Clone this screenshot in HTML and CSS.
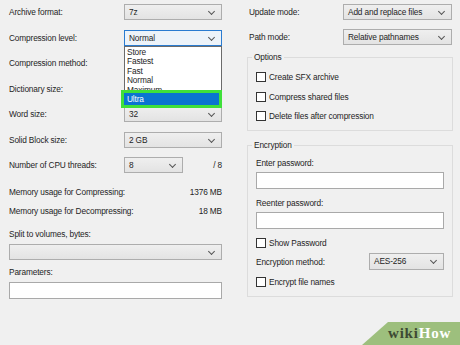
FILE: index.html
```html
<!DOCTYPE html>
<html lang="en">
<head>
  <meta charset="UTF-8" />
  <title>Add to Archive</title>
  <link rel="stylesheet" href="styles.css">
</head>
<body>
  <div class="dialog">
    <!-- left column -->
    <section class="col left">
      <div class="form-grid">
        <span class="lbl">Archive format:</span>
        <div class="select">7z</div>

        <span class="lbl">Compression level:</span>
        <div class="select focus">
          Normal
          <div class="dropdown">
            <div class="opt">Store</div>
            <div class="opt">Fastest</div>
            <div class="opt">Fast</div>
            <div class="opt">Normal</div>
            <div class="opt">Maximum</div>
          </div>
          <div class="picked">Ultra</div>
        </div>

        <!-- these two combos sit under the open list -->
        <span class="lbl">Compression method:</span>
        <div class="select"></div>

        <span class="lbl">Dictionary size:</span>
        <div class="select"></div>

        <span class="lbl">Word size:</span>
        <div class="select">32</div>

        <span class="lbl">Solid Block size:</span>
        <div class="select">2 GB</div>

        <span class="lbl">Number of CPU threads:</span>
        <div class="cpu">
          <div class="select small">8</div>
          <span>/ 8</span>
        </div>
      </div>

      <div class="mem first"><span>Memory usage for Compressing:</span><span>1376 MB</span></div>
      <div class="mem"><span>Memory usage for Decompressing:</span><span>18 MB</span></div>

      <div class="lbl split">Split to volumes, bytes:</div>
      <div class="select"></div>

      <div class="lbl params">Parameters:</div>
      <div class="field"></div>
    </section>

    <!-- right column -->
    <section class="col right">
      <div class="form-grid narrow">
        <span class="lbl">Update mode:</span>
        <div class="select">Add and replace files</div>
        <span class="lbl">Path mode:</span>
        <div class="select">Relative pathnames</div>
      </div>

      <fieldset class="group options">
        <legend>Options</legend>
        <div class="check"><i></i>Create SFX archive</div>
        <div class="check"><i></i>Compress shared files</div>
        <div class="check"><i></i>Delete files after compression</div>
      </fieldset>

      <fieldset class="group encryption">
        <legend>Encryption</legend>
        <div class="lbl pw">Enter password:</div>
        <div class="field"></div>
        <div class="lbl pw2">Reenter password:</div>
        <div class="field"></div>
        <div class="check show"><i></i>Show Password</div>
        <div class="method">
          <span class="lbl">Encryption method:</span>
          <div class="select aes">AES-256</div>
        </div>
        <div class="check names"><i></i>Encrypt file names</div>
      </fieldset>
    </section>

    <div class="wikihow"><b>wiki</b><span>How</span></div>
  </div>
</body>
</html>
```

FILE: styles.css
```css
* { box-sizing: border-box; }
body {
  margin: 0;
  background: #f0f0f0;
  font-family: "Liberation Sans", Arial, sans-serif;
  font-size: 8.3px;
  letter-spacing: -0.15px;
  color: #1e1e1e;
  overflow: hidden;
}
.dialog {
  position: relative;
  width: 460px;
  height: 345px;
  display: flex;
  gap: 27px;
  padding: 4px 0 0 9px;
}
.col.left { width: 213px; }
.col.right { width: 204px; }

.lbl { line-height: 12px; }

.form-grid {
  display: grid;
  grid-template-columns: 115px 98px;
  grid-auto-rows: 16px;
  row-gap: 9.5px;
  align-items: center;
}
.form-grid.narrow {
  grid-template-columns: 94px 109px;
  row-gap: 9px;
}

/* combo boxes */
.select {
  position: relative;
  height: 16px;
  line-height: 14px;
  padding-left: 4px;
  border: 1px solid #adadad;
  background: linear-gradient(#efefef, #e3e3e3);
}
.select::after {
  content: "";
  position: absolute;
  right: 7px;
  top: 4px;
  width: 4px;
  height: 4px;
  border-right: 1px solid #555;
  border-bottom: 1px solid #555;
  transform: rotate(45deg);
}
.select.focus {
  border-color: #2a7bd0;
  background: #edf3f9;
}
.select.small { width: 59px; }

.dropdown {
  position: absolute;
  z-index: 2;
  top: 15px;
  left: -1px;
  width: 98px;
  height: 61px;
  padding: 1px 0 0 2px;
  background: #fff;
  border: 1px solid #6b6b6b;
  overflow: hidden;
}
.opt { height: 9.5px; line-height: 9.5px; }
.picked {
  position: absolute;
  z-index: 3;
  top: 59px;
  left: -4px;
  width: 101px;
  height: 18px;
  padding-left: 3px;
  line-height: 12px;
  color: #fff;
  background: #0a74d0;
  border: 3px solid #3fe03a;
}

.cpu {
  display: flex;
  align-items: center;
  justify-content: space-between;
}

.mem {
  display: flex;
  justify-content: space-between;
  line-height: 12px;
  margin-top: 7px;
}
.mem.first { margin-top: 13px; }

.split { margin: 11px 0 4px; }
.params { margin: 6px 0 4px; }

.field {
  height: 17px;
  background: #fff;
  border: 1px solid #a9a9a9;
}

/* group boxes */
.group {
  margin: 6px 0 0 -2px;
  padding: 0 8px 8px;
  border: 1px solid #dcdcdc;
}
.group legend {
  margin-left: -4px;
  padding: 0 2px;
  line-height: 12px;
}
.check {
  display: flex;
  align-items: center;
  gap: 3px;
  height: 12px;
  line-height: 12px;
  margin-top: 7.5px;
}
.check i {
  width: 10px;
  height: 10px;
  border: 1px solid #333;
  background: #fff;
}
.options .check:first-of-type { margin-top: 8px; }

.encryption { margin-top: 8px; }
.pw { margin: 6px 0 3px; }
.pw2 { margin: 8px 0 3px; }
.check.show { margin-top: 8px; }
.method {
  display: flex;
  align-items: center;
  justify-content: space-between;
  margin-top: 4px;
}
.select.aes { width: 75px; height: 17px; }
.check.names { margin-top: 6px; }

/* watermark */
.wikihow {
  position: absolute;
  right: 0;
  bottom: 0;
  width: 98px;
  height: 23px;
  padding: 2px 0 0 26px;
  background: #9dbf7d;
  clip-path: polygon(26px 0, 100% 0, 100% 100%, 0 100%);
  font-family: "Liberation Serif", serif;
  font-size: 15px;
  letter-spacing: 0.8px;
  line-height: 18px;
}
.wikihow b { color: #3d4a33; }
.wikihow span { color: #fff; font-weight: bold; }
```
